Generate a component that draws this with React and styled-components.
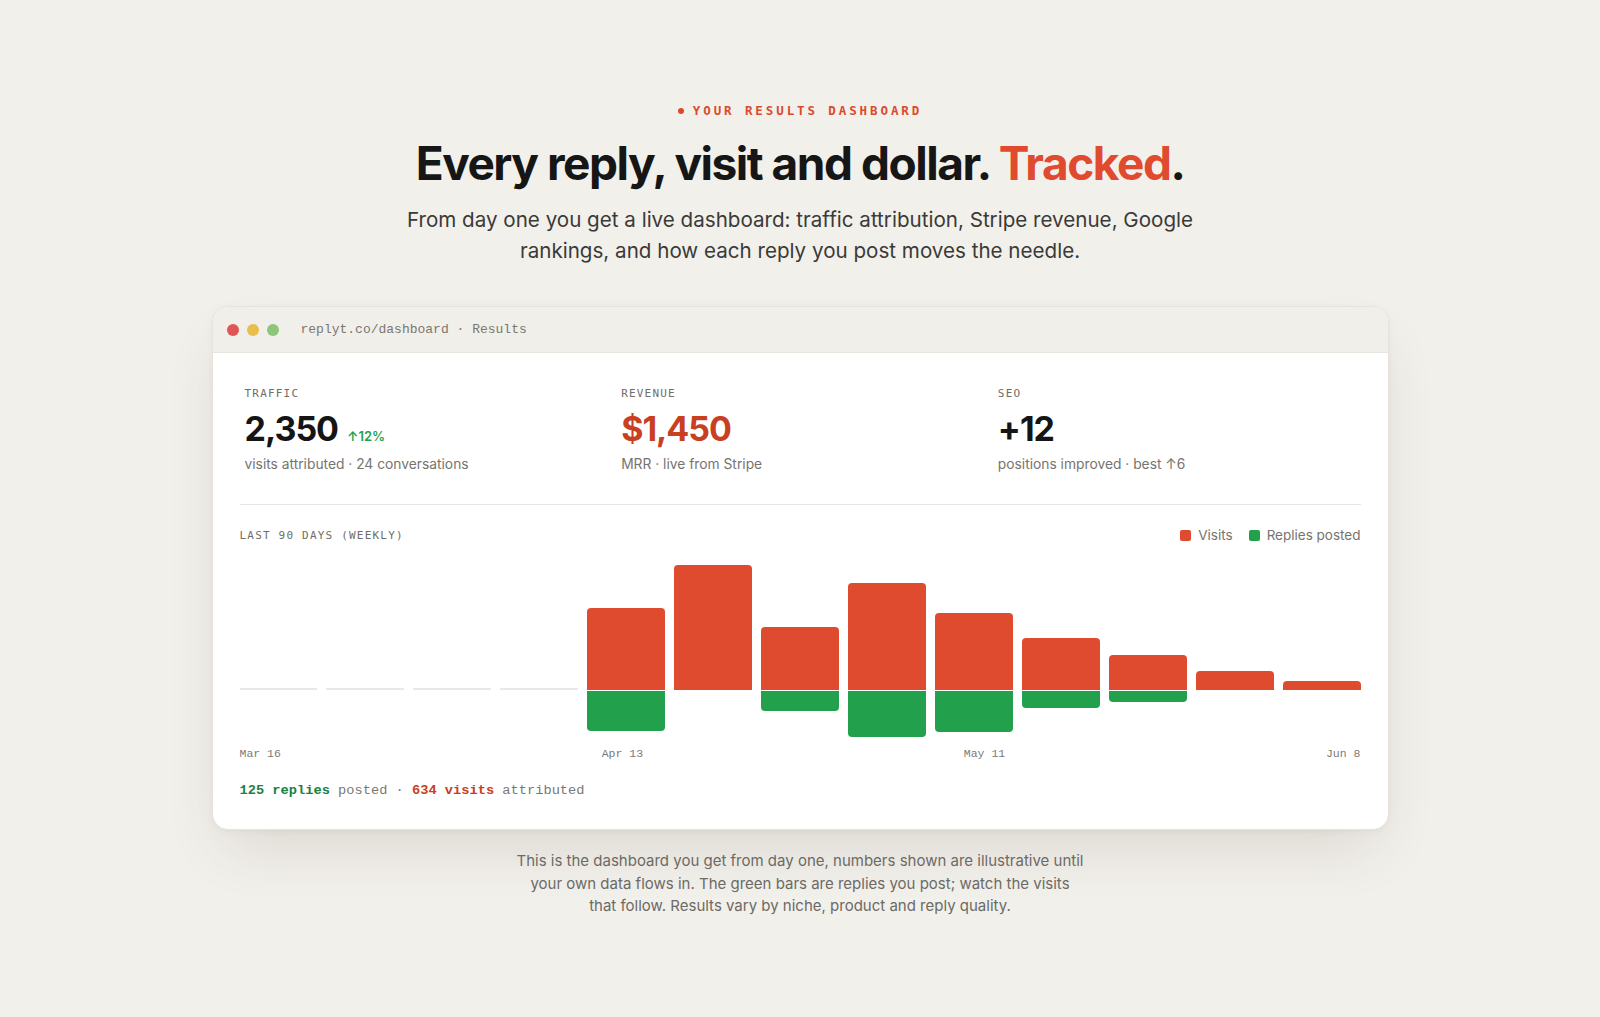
import React from "react";
import { styled, createGlobalStyle } from "styled-components";

const GlobalStyle = createGlobalStyle`
  html, body {
    margin: 0;
    padding: 0;
    background: #f2f0eb;
  }
  body {
    font-family: Inter, "Noto Sans", sans-serif;
    color: #1a1a1a;
    -webkit-font-smoothing: antialiased;
  }
`;

// visits above the line, replies below it (values are bar heights in px)
const weeks = [
  { visits: 0, replies: 0 },
  { visits: 0, replies: 0 },
  { visits: 0, replies: 0 },
  { visits: 0, replies: 0 },
  { visits: 82, replies: 40 },
  { visits: 125, replies: 0 },
  { visits: 63, replies: 20 },
  { visits: 107, replies: 46 },
  { visits: 77, replies: 41 },
  { visits: 52, replies: 17 },
  { visits: 35, replies: 11 },
  { visits: 19, replies: 0 },
  { visits: 9, replies: 0 },
];

const axisLabels = ["Mar 16", "Apr 13", "May 11", "Jun 8"];

const stats = [
  {
    label: "TRAFFIC",
    value: "2,350",
    delta: "↑12%",
    sub: "visits attributed · 24 conversations",
  },
  { label: "REVENUE", value: "$1,450", tone: "red", sub: "MRR · live from Stripe" },
  { label: "SEO", value: "+12", sub: "positions improved · best ↑6" },
];

function Stat(props) {
  const { label, value, delta, sub, tone } = props;
  return (
    <StatBox>
      <StatLabel>{label}</StatLabel>
      <StatValueRow>
        <StatValue className={tone}>{value}</StatValue>
        {delta && <Delta>{delta}</Delta>}
      </StatValueRow>
      <StatSub>{sub}</StatSub>
    </StatBox>
  );
}

function WeekBar(props) {
  const { visits, replies } = props;
  const empty = visits === 0 && replies === 0;
  return (
    <BarColumn>
      <UpperHalf>
        {empty ? (
          <EmptyLine />
        ) : (
          <VisitsBar style={{ height: visits }} />
        )}
      </UpperHalf>
      <LowerHalf>
        {replies > 0 && <RepliesBar style={{ height: replies }} />}
      </LowerHalf>
    </BarColumn>
  );
}

export default function App() {
  return (
    <Page>
      <GlobalStyle />
      <Eyebrow>
        <Dot />
        YOUR RESULTS DASHBOARD
      </Eyebrow>
      <Headline>
        Every reply, visit and dollar. <Accent>Tracked</Accent>.
      </Headline>
      <Lead>
        From day one you get a live dashboard: traffic attribution, Stripe
        revenue, Google rankings, and how each reply you post moves the needle.
      </Lead>

      <Window>
        <TitleBar>
          <Lights>
            <Light color="#e05656" />
            <Light color="#e8be4c" />
            <Light color="#8dc57b" />
          </Lights>
          <Url>replyt.co/dashboard · Results</Url>
        </TitleBar>
        <WindowBody>
          <StatsRow>
            {stats.map((s) => (
              <Stat key={s.label} {...s} />
            ))}
          </StatsRow>
          <Divider />
          <ChartHeader>
            <ChartTitle>LAST 90 DAYS (WEEKLY)</ChartTitle>
            <Legend>
              <LegendItem>
                <Swatch className="visits" />
                Visits
              </LegendItem>
              <LegendItem>
                <Swatch className="replies" />
                Replies posted
              </LegendItem>
            </Legend>
          </ChartHeader>
          <Bars>
            {weeks.map((w, i) => (
              <WeekBar key={i} {...w} />
            ))}
          </Bars>
          <AxisRow>
            {axisLabels.map((l) => (
              <span key={l}>{l}</span>
            ))}
          </AxisRow>
          <Totals>
            <b className="green">125 replies</b> posted ·{" "}
            <b className="red">634 visits</b> attributed
          </Totals>
        </WindowBody>
      </Window>

      <Caption>
        This is the dashboard you get from day one, numbers shown are
        illustrative until your own data flows in. The green bars are replies
        you post; watch the visits that follow. Results vary by niche, product
        and reply quality.
      </Caption>
    </Page>
  );
}

const Page = styled.main`
  min-height: 1017px;
  box-sizing: border-box;
  padding: 103px 0 80px;
  display: flex;
  flex-direction: column;
  align-items: center;
`;

const Eyebrow = styled.div`
  display: flex;
  align-items: center;
  gap: 9px;
  font-family: "DejaVu Sans Mono", "Liberation Mono", monospace;
  font-size: 12.5px;
  line-height: 16px;
  font-weight: 700;
  letter-spacing: 2.9px;
  color: #dc4a2e;
`;

const Dot = styled.span`
  width: 6px;
  height: 6px;
  border-radius: 50%;
  background: #dc4a2e;
`;

const Headline = styled.h1`
  margin: 19px 0 0;
  font-family: Inter, "Noto Sans", sans-serif;
  font-size: 46px;
  line-height: 50px;
  font-weight: 700;
  letter-spacing: -0.032em;
  color: #161616;
`;

const Accent = styled.span`
  color: #e04a2f;
`;

const Lead = styled.p`
  margin: 16px 0 0;
  max-width: 820px;
  text-align: center;
  font-size: 20.6px;
  line-height: 31px;
  color: #3b3a37;
`;

const Window = styled.section`
  margin-top: 40px;
  width: 1177px;
  box-sizing: border-box;
  border: 1px solid #e6e3dc;
  border-radius: 16px;
  background: #ffffff;
  overflow: hidden;
  box-shadow: 0 28px 60px -14px rgba(70, 60, 40, 0.14),
    0 2px 6px rgba(70, 60, 40, 0.05);
`;

const TitleBar = styled.div`
  height: 45px;
  display: flex;
  align-items: center;
  gap: 22px;
  padding: 0 14px;
  background: #f1efe9;
  border-bottom: 1px solid #e8e5de;
`;

const Lights = styled.div`
  display: flex;
  gap: 8px;
`;

const Light = styled.span`
  width: 12px;
  height: 12px;
  border-radius: 50%;
  background: ${(p) => p.color};
`;

const Url = styled.span`
  font-family: "Liberation Mono", "DejaVu Sans Mono", monospace;
  font-size: 13px;
  color: #7a7873;
`;

const WindowBody = styled.div`
  padding: 34px 27px 28px;
`;

const StatsRow = styled.div`
  display: grid;
  grid-template-columns: repeat(3, 1fr);
  column-gap: 14px;
  padding-left: 5px;
`;

const StatBox = styled.div`
  display: flex;
  flex-direction: column;
`;

const StatLabel = styled.div`
  font-family: "DejaVu Sans Mono", "Liberation Mono", monospace;
  font-size: 11px;
  line-height: 14px;
  letter-spacing: 1.2px;
  color: #6f6d69;
`;

const StatValueRow = styled.div`
  margin-top: 8px;
  display: flex;
  align-items: baseline;
  gap: 9px;
`;

const StatValue = styled.div`
  font-size: 34px;
  line-height: 40px;
  font-weight: 700;
  letter-spacing: -0.03em;
  color: #151515;
  &.red {
    color: #c8401f;
  }
`;

const Delta = styled.span`
  font-size: 13px;
  font-weight: 600;
  color: #23a14d;
`;

const StatSub = styled.div`
  margin-top: 5px;
  font-size: 13.8px;
  line-height: 20px;
  color: #76746f;
`;

const Divider = styled.hr`
  margin: 30px 0 0;
  border: none;
  border-top: 1.5px solid #e7e6e2;
`;

const ChartHeader = styled.div`
  margin-top: 20px;
  height: 20px;
  display: flex;
  align-items: center;
  justify-content: space-between;
`;

const ChartTitle = styled.div`
  font-family: "DejaVu Sans Mono", "Liberation Mono", monospace;
  font-size: 11px;
  letter-spacing: 1.2px;
  color: #6f6d69;
`;

const Legend = styled.div`
  display: flex;
  gap: 16px;
`;

const LegendItem = styled.div`
  display: flex;
  align-items: center;
  gap: 7px;
  font-size: 13.5px;
  color: #75736e;
`;

const Swatch = styled.span`
  width: 11px;
  height: 11px;
  border-radius: 2px;
  &.visits {
    background: #df4b2f;
  }
  &.replies {
    background: #22a04c;
  }
`;

const Bars = styled.div`
  margin-top: 5px;
  display: grid;
  grid-template-columns: repeat(13, 1fr);
  column-gap: 9.5px;
`;

const BarColumn = styled.div`
  display: flex;
  flex-direction: column;
`;

const UpperHalf = styled.div`
  height: 140px;
  display: flex;
  flex-direction: column;
  justify-content: flex-end;
`;

const LowerHalf = styled.div`
  height: 50px;
  padding-top: 1px;
  box-sizing: border-box;
`;

const EmptyLine = styled.div`
  height: 2px;
  background: #e9e8e5;
`;

const VisitsBar = styled.div`
  background: #df4b2f;
  border-radius: 4px 4px 0 0;
`;

const RepliesBar = styled.div`
  background: #22a04c;
  border-radius: 0 0 4px 4px;
`;

const AxisRow = styled.div`
  margin-top: 7px;
  display: flex;
  justify-content: space-between;
  font-family: "Liberation Mono", "DejaVu Sans Mono", monospace;
  font-size: 11.5px;
  line-height: 14px;
  color: #7c7a75;
`;

const Totals = styled.div`
  margin-top: 20px;
  font-family: "Liberation Mono", "DejaVu Sans Mono", monospace;
  font-size: 13.7px;
  line-height: 20px;
  color: #7a7873;
  b {
    font-weight: 700;
  }
  .green {
    color: #1d7f42;
  }
  .red {
    color: #c8401f;
  }
`;

const Caption = styled.p`
  margin: 20px 0 0;
  max-width: 570px;
  text-align: center;
  font-size: 15px;
  line-height: 22.5px;
  color: #6c6a65;
`;
